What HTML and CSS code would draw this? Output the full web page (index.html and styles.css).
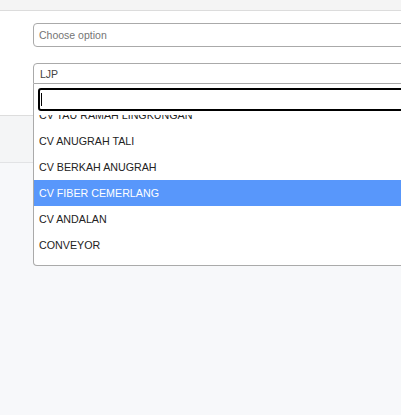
FILE: index.html
```html
<!DOCTYPE html>
<html>
<head>
<meta charset="utf-8">
<link rel="stylesheet" href="styles.css">
</head>
<body>
<div class="topbar"></div>
<div class="panel">
  <div class="field">
    <div class="select-box">
      <span class="placeholder">Choose option</span>
    </div>
  </div>
  <div class="field field-open">
    <div class="select-box open">
      <span class="value">LJP</span>
    </div>
    <div class="dropdown">
      <div class="search-wrap">
        <div class="search"><span class="caret"></span></div>
      </div>
      <div class="results">
        <ul class="options">
          <li class="option first">CV TAU RAMAH LINGKUNGAN</li>
          <li class="option">CV ANUGRAH TALI</li>
          <li class="option">CV BERKAH ANUGRAH</li>
          <li class="option active">CV FIBER CEMERLANG</li>
          <li class="option">CV ANDALAN</li>
          <li class="option">CONVEYOR</li>
        </ul>
      </div>
    </div>
  </div>
</div>
<div class="band"></div>
</body>
</html>
```
FILE: styles.css
```css
html, body {
  margin: 0;
  padding: 0;
}
body {
  background: #f7f8fa;
  font-family: "Liberation Sans", Arial, sans-serif;
  font-size: 10.5px;
  width: 401px;
  height: 415px;
  overflow: hidden;
}
.topbar {
  height: 10px;
  background: #f4f4f4;
  border-bottom: 1px solid #dcdcdc;
}
.panel {
  height: 92px;
  background: #ffffff;
  border-bottom: 1px solid #dddddd;
  padding: 12px 0 0 33px;
  display: flex;
  flex-direction: column;
  gap: 16px;
}
.band {
  height: 46px;
  background: #f4f5f6;
  border-bottom: 1px solid #e2e3e5;
}
.field {
  position: relative;
  width: 420px;
}
.select-box {
  box-sizing: border-box;
  height: 24px;
  border: 1px solid #aaaaaa;
  border-radius: 4px;
  background: #fff;
  display: flex;
  align-items: center;
  padding-left: 5px;
}
.select-box.open {
  height: 21px;
  border-radius: 4px 4px 0 0;
  padding-left: 6px;
}
.placeholder {
  color: #757575;
}
.value {
  color: #444444;
}
.dropdown {
  position: absolute;
  left: 0;
  top: 21px;
  width: 100%;
  box-sizing: border-box;
  height: 182px;
  background: #fff;
  border: 1px solid #aaaaaa;
  border-top: none;
  border-radius: 0 0 4px 4px;
  display: flex;
  flex-direction: column;
}
.search-wrap {
  padding: 4px;
}
.search {
  box-sizing: border-box;
  height: 23px;
  border: 2px solid #000;
  border-radius: 3px;
  background: #fff;
  display: flex;
  align-items: center;
  padding-left: 1px;
}
.caret {
  display: block;
  width: 1px;
  height: 13px;
  background: #000;
}
.results {
  height: 150px;
  overflow: hidden;
}
.options {
  list-style: none;
  margin: 0;
  padding: 0;
}
.option {
  height: 26px;
  line-height: 26px;
  padding: 0 5px;
  font-size: 10.7px;
  color: #222222;
  white-space: nowrap;
}
.option.first {
  margin-top: -13px;
}
.option.active {
  background: #5897fb;
  color: #ffffff;
}
```
